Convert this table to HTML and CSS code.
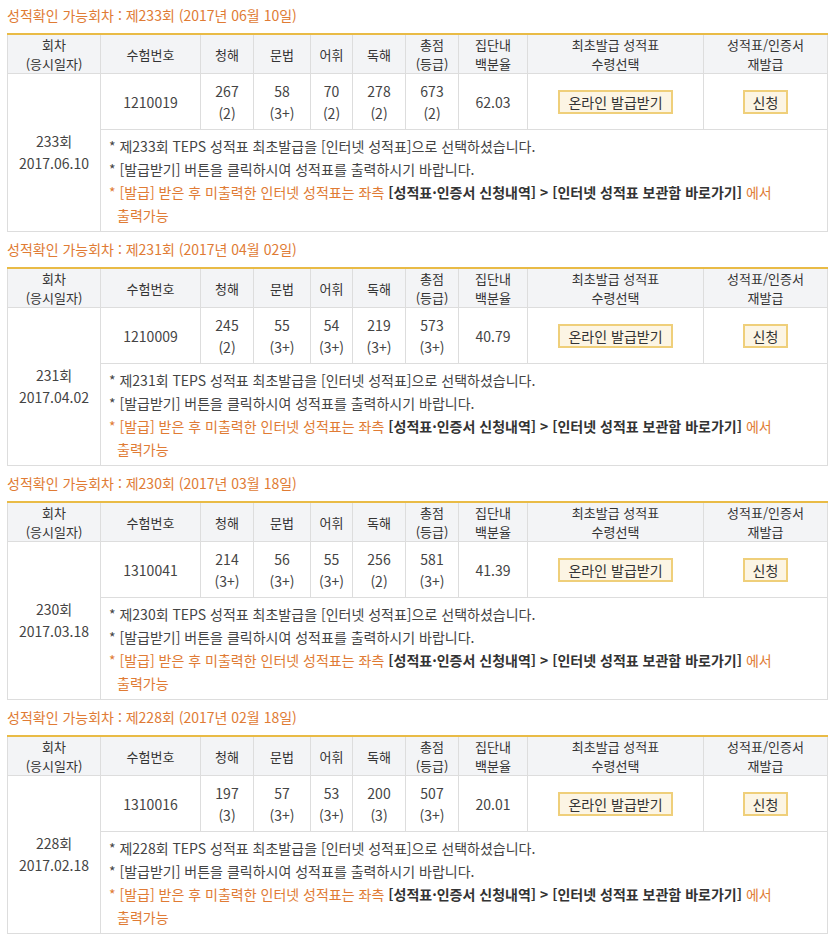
FILE: index.html
```html
<!DOCTYPE html>
<html lang="ko">
<head>
<meta charset="utf-8">
<link rel="stylesheet" href="styles.css">
</head>
<body>
<div class="page">

<section class="sec">
  <h2 class="title">성적확인 가능회차 : 제233회 (2017년 06월 10일)</h2>
  <table class="score">
    <colgroup><col class="c1"><col class="c2"><col class="c3"><col class="c4"><col class="c5"><col class="c6"><col class="c7"><col class="c8"><col class="c9"><col class="c10"></colgroup>
    <thead><tr><th>회차<br>(응시일자)</th><th>수험번호</th><th>청해</th><th>문법</th><th>어휘</th><th>독해</th><th>총점<br>(등급)</th><th>집단내<br>백분율</th><th>최초발급 성적표<br>수령선택</th><th>성적표/인증서<br>재발급</th></tr></thead>
    <tbody>
      <tr class="data"><td rowspan="2" class="round">233회<br>2017.06.10</td><td>1210019</td><td>267<br>(2)</td><td>58<br>(3+)</td><td>70<br>(2)</td><td>278<br>(2)</td><td>673<br>(2)</td><td>62.03</td><td><span class="btn">온라인 발급받기</span></td><td><span class="btn">신청</span></td></tr>
      <tr><td colspan="9" class="notes">
        <p>* 제233회 TEPS 성적표 최초발급을 [인터넷 성적표]으로 선택하셨습니다.</p>
        <p>* [발급받기] 버튼을 클릭하시여 성적표를 출력하시기 바랍니다.</p>
        <p class="hl">* [발급] 받은 후 미출력한 인터넷 성적표는 좌측 <b>[성적표·인증서 신청내역] &gt; [인터넷 성적표 보관함 바로가기]</b> 에서<br><span class="ind">출력가능</span></p>
      </td></tr>
    </tbody>
  </table>
</section>

<section class="sec">
  <h2 class="title">성적확인 가능회차 : 제231회 (2017년 04월 02일)</h2>
  <table class="score">
    <colgroup><col class="c1"><col class="c2"><col class="c3"><col class="c4"><col class="c5"><col class="c6"><col class="c7"><col class="c8"><col class="c9"><col class="c10"></colgroup>
    <thead><tr><th>회차<br>(응시일자)</th><th>수험번호</th><th>청해</th><th>문법</th><th>어휘</th><th>독해</th><th>총점<br>(등급)</th><th>집단내<br>백분율</th><th>최초발급 성적표<br>수령선택</th><th>성적표/인증서<br>재발급</th></tr></thead>
    <tbody>
      <tr class="data"><td rowspan="2" class="round">231회<br>2017.04.02</td><td>1210009</td><td>245<br>(2)</td><td>55<br>(3+)</td><td>54<br>(3+)</td><td>219<br>(3+)</td><td>573<br>(3+)</td><td>40.79</td><td><span class="btn">온라인 발급받기</span></td><td><span class="btn">신청</span></td></tr>
      <tr><td colspan="9" class="notes">
        <p>* 제231회 TEPS 성적표 최초발급을 [인터넷 성적표]으로 선택하셨습니다.</p>
        <p>* [발급받기] 버튼을 클릭하시여 성적표를 출력하시기 바랍니다.</p>
        <p class="hl">* [발급] 받은 후 미출력한 인터넷 성적표는 좌측 <b>[성적표·인증서 신청내역] &gt; [인터넷 성적표 보관함 바로가기]</b> 에서<br><span class="ind">출력가능</span></p>
      </td></tr>
    </tbody>
  </table>
</section>

<section class="sec">
  <h2 class="title">성적확인 가능회차 : 제230회 (2017년 03월 18일)</h2>
  <table class="score">
    <colgroup><col class="c1"><col class="c2"><col class="c3"><col class="c4"><col class="c5"><col class="c6"><col class="c7"><col class="c8"><col class="c9"><col class="c10"></colgroup>
    <thead><tr><th>회차<br>(응시일자)</th><th>수험번호</th><th>청해</th><th>문법</th><th>어휘</th><th>독해</th><th>총점<br>(등급)</th><th>집단내<br>백분율</th><th>최초발급 성적표<br>수령선택</th><th>성적표/인증서<br>재발급</th></tr></thead>
    <tbody>
      <tr class="data"><td rowspan="2" class="round">230회<br>2017.03.18</td><td>1310041</td><td>214<br>(3+)</td><td>56<br>(3+)</td><td>55<br>(3+)</td><td>256<br>(2)</td><td>581<br>(3+)</td><td>41.39</td><td><span class="btn">온라인 발급받기</span></td><td><span class="btn">신청</span></td></tr>
      <tr><td colspan="9" class="notes">
        <p>* 제230회 TEPS 성적표 최초발급을 [인터넷 성적표]으로 선택하셨습니다.</p>
        <p>* [발급받기] 버튼을 클릭하시여 성적표를 출력하시기 바랍니다.</p>
        <p class="hl">* [발급] 받은 후 미출력한 인터넷 성적표는 좌측 <b>[성적표·인증서 신청내역] &gt; [인터넷 성적표 보관함 바로가기]</b> 에서<br><span class="ind">출력가능</span></p>
      </td></tr>
    </tbody>
  </table>
</section>

<section class="sec">
  <h2 class="title">성적확인 가능회차 : 제228회 (2017년 02월 18일)</h2>
  <table class="score">
    <colgroup><col class="c1"><col class="c2"><col class="c3"><col class="c4"><col class="c5"><col class="c6"><col class="c7"><col class="c8"><col class="c9"><col class="c10"></colgroup>
    <thead><tr><th>회차<br>(응시일자)</th><th>수험번호</th><th>청해</th><th>문법</th><th>어휘</th><th>독해</th><th>총점<br>(등급)</th><th>집단내<br>백분율</th><th>최초발급 성적표<br>수령선택</th><th>성적표/인증서<br>재발급</th></tr></thead>
    <tbody>
      <tr class="data"><td rowspan="2" class="round">228회<br>2017.02.18</td><td>1310016</td><td>197<br>(3)</td><td>57<br>(3+)</td><td>53<br>(3+)</td><td>200<br>(3)</td><td>507<br>(3+)</td><td>20.01</td><td><span class="btn">온라인 발급받기</span></td><td><span class="btn">신청</span></td></tr>
      <tr><td colspan="9" class="notes">
        <p>* 제228회 TEPS 성적표 최초발급을 [인터넷 성적표]으로 선택하셨습니다.</p>
        <p>* [발급받기] 버튼을 클릭하시여 성적표를 출력하시기 바랍니다.</p>
        <p class="hl">* [발급] 받은 후 미출력한 인터넷 성적표는 좌측 <b>[성적표·인증서 신청내역] &gt; [인터넷 성적표 보관함 바로가기]</b> 에서<br><span class="ind">출력가능</span></p>
      </td></tr>
    </tbody>
  </table>
</section>

</div>
</body>
</html>
```

FILE: styles.css
```css
* { box-sizing: border-box; }
html, body { margin: 0; padding: 0; background: #fff; }
body {
  font-family: "Noto Sans CJK KR", "Noto Sans", sans-serif;
  font-size: 14px;
  color: #444;
}
.page { padding: 0 7px; }
.sec { margin-bottom: 2px; }
.title {
  margin: 0;
  padding: 5px 0 8px;
  font-size: 14px;
  font-weight: normal;
  line-height: 20px;
  color: #e07b34;
}
.score {
  width: 820px;
  border-collapse: collapse;
  table-layout: fixed;
  border-top: 2px solid #e9bb46;
  border-left: 1px solid #ddd;
  border-right: 1px solid #ddd;
}
.c1 { width: 93px; }
.c2 { width: 100px; }
.c3 { width: 53px; }
.c4 { width: 57px; }
.c5 { width: 42px; }
.c6 { width: 53px; }
.c7 { width: 53px; }
.c8 { width: 69px; }
.c9 { width: 176px; }
.c10 { width: 124px; }
.score th {
  background: #f3f4f6;
  font-weight: normal;
  font-size: 13px;
  color: #333;
  line-height: 19px;
  height: 38px;
  padding: 0;
  text-align: center;
  border: 1px solid #ddd;
  border-top: 0;
}
.score td {
  border: 1px solid #ddd;
  text-align: center;
  line-height: 22px;
  padding: 6px 0 5px;
  color: #444;
}
.score td.round { line-height: 22px; padding-top: 4px; }
.btn {
  display: inline-block;
  background: #fcf5e4;
  border: 2px solid #efcf7a;
  padding: 0 8px;
  line-height: 20px;
  color: #333;
}
.score td.notes {
  text-align: left;
  padding: 5px 8px 4px;
  line-height: 23px;
}
.notes p { margin: 0; }
.notes .hl { color: #e07b34; }
.notes .hl b { color: #333; font-weight: bold; }
.ind { padding-left: 8px; }
```
